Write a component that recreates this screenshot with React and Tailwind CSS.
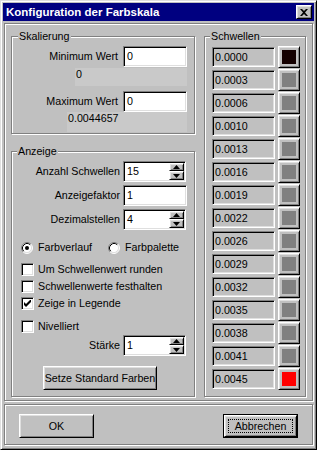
import React from "react";

const raised =
  "border border-t-white border-l-white border-r-black border-b-black shadow-[inset_1px_1px_0_#dfdfdf,inset_-1px_-1px_0_#808080]";
const sunken =
  "border border-t-[#808080] border-l-[#808080] border-r-white border-b-white shadow-[inset_1px_1px_0_#000,inset_-1px_-1px_0_#dfdfdf]";
const etched = "border border-[#808080] shadow-[inset_1px_1px_0_#fff,1px_1px_0_#fff]";

function Group({ label, labelClass, className, children }) {
  return (
    <div className={`relative ${etched} ${className}`}>
      <div className={`absolute top-[-7px] bg-[#c0c0c0] px-[1px] leading-[13px] ${labelClass}`}>{label}</div>
      {children}
    </div>
  );
}

function Field({ value, className }) {
  return (
    <div className={`${sunken} bg-white h-[21px] flex items-center pl-[3px] ${className}`}>{value}</div>
  );
}

function Arrow({ up }) {
  return (
    <svg width="7" height="4" viewBox="0 0 7 4" className="block">
      {up ? <path d="M3.5 0 L7 4 L0 4 Z" fill="#000" /> : <path d="M0 0 L7 0 L3.5 4 Z" fill="#000" />}
    </svg>
  );
}

function Spin({ value, className }) {
  return (
    <div className={`${sunken} bg-white h-[21px] p-[1px] flex ${className}`}>
      <div className="flex-1 flex items-center pl-[2px]">{value}</div>
      <div className="w-[15px] flex flex-col bg-[#c0c0c0]">
        <div className={`${raised} h-[8px] flex items-center justify-center`}>
          <Arrow up />
        </div>
        <div className={`${raised} h-[9px] flex items-center justify-center`}>
          <Arrow />
        </div>
      </div>
    </div>
  );
}

function Checkbox({ checked, label, className }) {
  return (
    <div className={`flex items-center h-[13px] ml-[9px] ${className}`}>
      <div className={`${sunken} bg-white w-[13px] h-[13px] flex items-center justify-center`}>
        {checked && (
          <svg width="7" height="7" viewBox="0 0 7 7" className="block">
            <path d="M0 2 L2 4 L7 -1 L7 2 L2 7 L0 5 Z" fill="#000" />
          </svg>
        )}
      </div>
      <span className="ml-[4px]">{label}</span>
    </div>
  );
}

function Radio({ checked }) {
  return (
    <svg width="12" height="12" viewBox="0 0 12 12" className="block shrink-0">
      <circle cx="6" cy="6" r="5" fill="#fff" />
      <path d="M2.11 9.89 A5.5 5.5 0 0 1 9.89 2.11" fill="none" stroke="#808080" strokeWidth="1" />
      <path d="M9.89 2.11 A5.5 5.5 0 0 1 2.11 9.89" fill="none" stroke="#fff" strokeWidth="1" />
      <path d="M2.82 9.18 A4.5 4.5 0 0 1 9.18 2.82" fill="none" stroke="#000" strokeWidth="1" />
      <path d="M9.18 2.82 A4.5 4.5 0 0 1 2.82 9.18" fill="none" stroke="#dfdfdf" strokeWidth="1" />
      {checked && <circle cx="6" cy="6" r="2" fill="#000" />}
    </svg>
  );
}

const rows = [
  ["0.0000", "bg-[#140000]"],
  ["0.0003", "bg-[#808080]"],
  ["0.0006", "bg-[#808080]"],
  ["0.0010", "bg-[#808080]"],
  ["0.0013", "bg-[#808080]"],
  ["0.0016", "bg-[#808080]"],
  ["0.0019", "bg-[#808080]"],
  ["0.0022", "bg-[#808080]"],
  ["0.0026", "bg-[#808080]"],
  ["0.0029", "bg-[#808080]"],
  ["0.0032", "bg-[#808080]"],
  ["0.0035", "bg-[#808080]"],
  ["0.0038", "bg-[#808080]"],
  ["0.0041", "bg-[#808080]"],
  ["0.0045", "bg-[#ff0000]"],
];

export default function App() {
  return (
    <div className="w-[317px] h-[450px] bg-[#c0c0c0] font-['Liberation_Sans',Arial,sans-serif] text-[10.7px] leading-[13px] text-black border border-t-[#dfdfdf] border-l-[#dfdfdf] border-r-black border-b-black shadow-[inset_1px_1px_0_#fff,inset_-1px_-1px_0_#808080] p-[2px] flex flex-col select-none">
      {/* Title bar */}
      <div className="h-[18px] shrink-0 bg-[#000080] flex items-center justify-between pl-[3px] pr-[2px]">
        <span className="text-white font-bold text-[11.5px] leading-[14px]">Konfiguration der Farbskala</span>
        <div className={`${raised} bg-[#c0c0c0] w-[16px] h-[14px] flex items-center justify-center`}>
          <svg width="8" height="7" viewBox="0 0 8 7" className="block">
            <path d="M0 0 H2 L4 2 L6 0 H8 L5 3.5 L8 7 H6 L4 5 L2 7 H0 L3 3.5 Z" fill="#000" />
          </svg>
        </div>
      </div>

      {/* Upper panel */}
      <div className={`${etched} mt-[2px] mx-[1px] h-[378px] shrink-0 pl-[6px] pt-[12px] flex gap-[9px]`}>
        {/* Left column */}
        <div className="w-[184px] flex flex-col">
          <Group label="Skalierung" labelClass="left-[6px]" className="h-[98px]">
            <div className="pt-[9px] flex flex-col">
              <div className="flex items-center h-[21px]">
                <div className="w-[106px] text-right">Minimum Wert</div>
                <Field value="0" className="ml-[5px] w-[64px]" />
              </div>
              <div className="ml-[63px] mt-[1px] w-[112px] h-[18px] bg-[#c9c9c9] pl-[1px]">0</div>
              <div className="flex items-center h-[21px] mt-[5px]">
                <div className="w-[106px] text-right">Maximum Wert</div>
                <Field value="0" className="ml-[5px] w-[64px]" />
              </div>
              <div className="ml-[55px] w-[120px] h-[20px] bg-[#c9c9c9] pl-[1px]">0.0044657</div>
            </div>
          </Group>

          <Group label="Anzeige" labelClass="left-[5px]" className="h-[246px] mt-[17px]">
            <div className="pt-[9px] flex flex-col">
              <div className="flex items-center h-[21px]">
                <div className="w-[108px] text-right">Anzahl Schwellen</div>
                <Spin value="15" className="ml-[3px] w-[63px]" />
              </div>
              <div className="flex items-center h-[21px] mt-[3px]">
                <div className="w-[108px] text-right">Anzeigefaktor</div>
                <Field value="1" className="ml-[3px] w-[64px]" />
              </div>
              <div className="flex items-center h-[21px] mt-[3px]">
                <div className="w-[108px] text-right">Dezimalstellen</div>
                <Spin value="4" className="ml-[3px] w-[63px]" />
              </div>

              <div className="flex items-center h-[13px] mt-[11px] ml-[9px]">
                <div className="w-[87px] flex items-center">
                  <Radio checked />
                  <span className="ml-[5px]">Farbverlauf</span>
                </div>
                <Radio />
                <span className="ml-[5px]">Farbpalette</span>
              </div>

              <Checkbox label="Um Schwellenwert runden" className="mt-[9px]" />
              <Checkbox label="Schwellenwerte festhalten" className="mt-[4px]" />
              <Checkbox checked label="Zeige in Legende" className="mt-[4px]" />
              <Checkbox label="Nivelliert" className="mt-[10px]" />

              <div className="flex items-center h-[21px] mt-[2px]">
                <div className="w-[108px] text-right">Stärke</div>
                <Spin value="1" className="ml-[3px] w-[63px]" />
              </div>

              <div className={`${raised} ml-[31px] mt-[10px] w-[114px] h-[24px] flex items-center justify-center`}>
                Setze Standard Farben
              </div>
            </div>
          </Group>
        </div>

        {/* Right column */}
        <Group label="Schwellen" labelClass="left-[5px]" className="w-[102px] h-[361px]">
          <div className="pt-[9px] pl-[7px] flex flex-col gap-[1px]">
            {rows.map(([v, c]) => (
              <div key={v} className="flex items-center h-[22px] gap-[3px]">
                <div className={`${sunken} w-[63px] h-[20px] flex items-center pl-[2px] bg-[#c0c0c0]`}>{v}</div>
                <div className={`${raised} w-[22px] h-[22px] p-[3px]`}>
                  <div className={`w-full h-full ${c}`} />
                </div>
              </div>
            ))}
          </div>
        </Group>
      </div>

      {/* Bottom panel */}
      <div className={`${etched} mt-[3px] mx-[1px] h-[41px] shrink-0 px-[14px] pt-[9px] flex justify-between items-start`}>
        <div className={`${raised} w-[75px] h-[24px] flex items-center justify-center`}>OK</div>
        <div className="w-[75px] h-[24px] border border-black">
          <div className={`${raised} relative w-full h-full flex items-center justify-center`}>
            <div className="absolute inset-[3px] border border-dotted border-black" />
            Abbrechen
          </div>
        </div>
      </div>
    </div>
  );
}
